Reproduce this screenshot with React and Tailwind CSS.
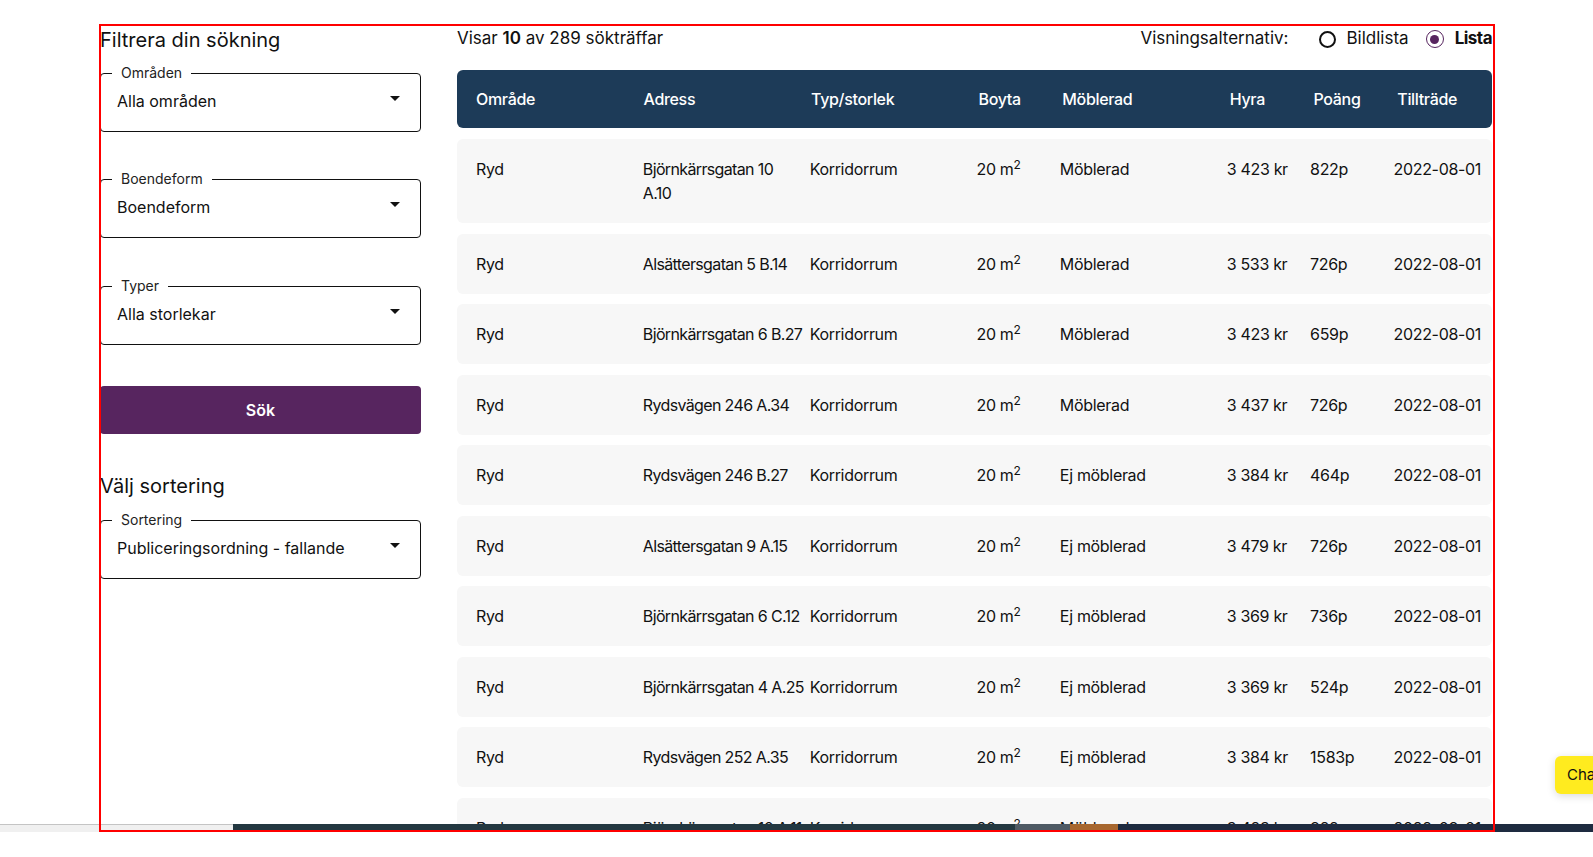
const rows = [
  ["Björnkärrsgatan 10\nA.10", "Möblerad", "3 423 kr", "822p"],
  ["Alsättersgatan 5 B.14", "Möblerad", "3 533 kr", "726p"],
  ["Björnkärrsgatan 6 B.27", "Möblerad", "3 423 kr", "659p"],
  ["Rydsvägen 246 A.34", "Möblerad", "3 437 kr", "726p"],
  ["Rydsvägen 246 B.27", "Ej möblerad", "3 384 kr", "464p"],
  ["Alsättersgatan 9 A.15", "Ej möblerad", "3 479 kr", "726p"],
  ["Björnkärrsgatan 6 C.12", "Ej möblerad", "3 369 kr", "736p"],
  ["Björnkärrsgatan 4 A.25", "Ej möblerad", "3 369 kr", "524p"],
  ["Rydsvägen 252 A.35", "Ej möblerad", "3 384 kr", "1583p"],
  ["Björnkärrsgatan 10 A.11", "Möblerad", "3 423 kr", "822p"],
];

const cols = "grid grid-cols-[2fr_2fr_2fr_1fr_2fr_1fr_1fr_1fr] pl-[19px] pr-[11px]";

function Caret() {
  return (
    <svg width="10" height="5" viewBox="0 0 10 5" className="shrink-0">
      <path d="M0 0h10L5 5z" fill="#111" />
    </svg>
  );
}

function Select({ label, value, className = "" }) {
  return (
    <fieldset className={`rounded-[4px] border border-[#111] px-4 pb-[18px] ${className}`}>
      <legend className="ml-[-5px] px-[9px] text-[14px] leading-5 text-[#222]">{label}</legend>
      <div className="flex items-center justify-between pt-[6px] pr-[4px]">
        <span className="text-[16px] leading-6 text-[#111]">{value}</span>
        <span className="-mt-[6px]">
          <Caret />
        </span>
      </div>
    </fieldset>
  );
}

export default function App() {
  return (
    <div className="h-[857px] w-full overflow-hidden bg-white font-['Inter',sans-serif] text-[#111]">
      <div className="relative h-[832px] overflow-hidden">
        <div className="flex pl-[100px] pt-[25px]">
          {/* Filters */}
          <aside className="w-[321px] shrink-0">
            <h2 className="mt-px text-[20px] leading-7">Filtrera din sökning</h2>
            <Select label="Områden" value="Alla områden" className="mt-[9px]" />
            <Select label="Boendeform" value="Boendeform" className="mt-[37px]" />
            <Select label="Typer" value="Alla storlekar" className="mt-[38px]" />
            <button className="mt-[41px] h-[48px] w-full rounded-[4px] bg-[#57255f] text-[16px] font-semibold text-white">
              Sök
            </button>
            <h2 className="mt-[38px] text-[20px] leading-7">Välj sortering</h2>
            <Select label="Sortering" value="Publiceringsordning - fallande" className="mt-[10px]" />
          </aside>

          {/* Results */}
          <main className="ml-[36px] w-[1035px] shrink-0">
            <div className="flex h-[28px] items-center justify-between">
              <p className="text-[17px]">
                Visar <b className="font-semibold">10</b> av 289 sökträffar
              </p>
              <div className="flex items-center text-[17px]">
                <span>Visningsalternativ:</span>
                <span className="ml-[31px] h-[17px] w-[17px] rounded-full border-2 border-[#111]" />
                <span className="ml-[10px]">Bildlista</span>
                <span className="ml-[17px] flex h-[18px] w-[18px] items-center justify-center rounded-full border border-[#57255f]">
                  <span className="h-[9px] w-[9px] rounded-full bg-[#57255f]" />
                </span>
                <span className="ml-[11px] font-bold tracking-[-0.03em]">Lista</span>
              </div>
            </div>

            <div className={`${cols} mt-[17px] h-[58px] items-center rounded-[6px] bg-[#1d3b58] text-[16px] font-medium tracking-[-0.02em] text-white`}>
              <span>Område</span>
              <span>Adress</span>
              <span>Typ/storlek</span>
              <span>Boyta</span>
              <span>Möblerad</span>
              <span>Hyra</span>
              <span>Poäng</span>
              <span>Tillträde</span>
            </div>

            <div className="mt-[11px] flex flex-col gap-[10.5px]">
              {rows.map(([addr, furn, rent, pts], i) => (
                <div key={i} className={`${cols} rounded-[6px] bg-[#f7f7f7] py-[18px] text-[16px] leading-6 tracking-[-0.02em] whitespace-nowrap`}>
                  <span>Ryd</span>
                  <span className="whitespace-pre tracking-[-0.04em]">{addr}</span>
                  <span>Korridorrum</span>
                  <span>
                    20 m<sup>2</sup>
                  </span>
                  <span>{furn}</span>
                  <span>{rent}</span>
                  <span>{pts}</span>
                  <span>2022-08-01</span>
                </div>
              ))}
            </div>
          </main>
        </div>

        {/* Chat button */}
        <div className="absolute left-[1555px] top-[756px] flex h-[38px] w-[90px] items-center rounded-[6px] bg-[#ffeb1f] pl-3 text-[15px] shadow-[0_2px_8px_rgba(0,0,0,0.15)]">
          Chatta
        </div>

        {/* Bottom bar */}
        <div className="absolute bottom-0 left-0 right-0 flex h-[8px]">
          <div className="relative w-[233px] border-t border-[#c4c4c4] bg-[#f0f0f0]">
            <span className="absolute left-[190px] top-[5px] h-[2px] w-[2px] bg-[#e070e0]" />
            <span className="absolute left-[214px] top-[5px] h-[2px] w-[4px] bg-[#e8b060]" />
          </div>
          <div className="w-[782px] bg-[#233841]" />
          <div className="w-[55px] bg-[#4e5a64]" />
          <div className="w-[48px] bg-[#a7672f]" />
          <div className="flex-1 bg-[#1e2b40]" />
        </div>

        {/* Annotation frame */}
        <div className="pointer-events-none absolute left-[99px] top-[24px] h-[808px] w-[1396px] outline-2 -outline-offset-2 outline-[#ff0000]" />
      </div>
    </div>
  );
}
